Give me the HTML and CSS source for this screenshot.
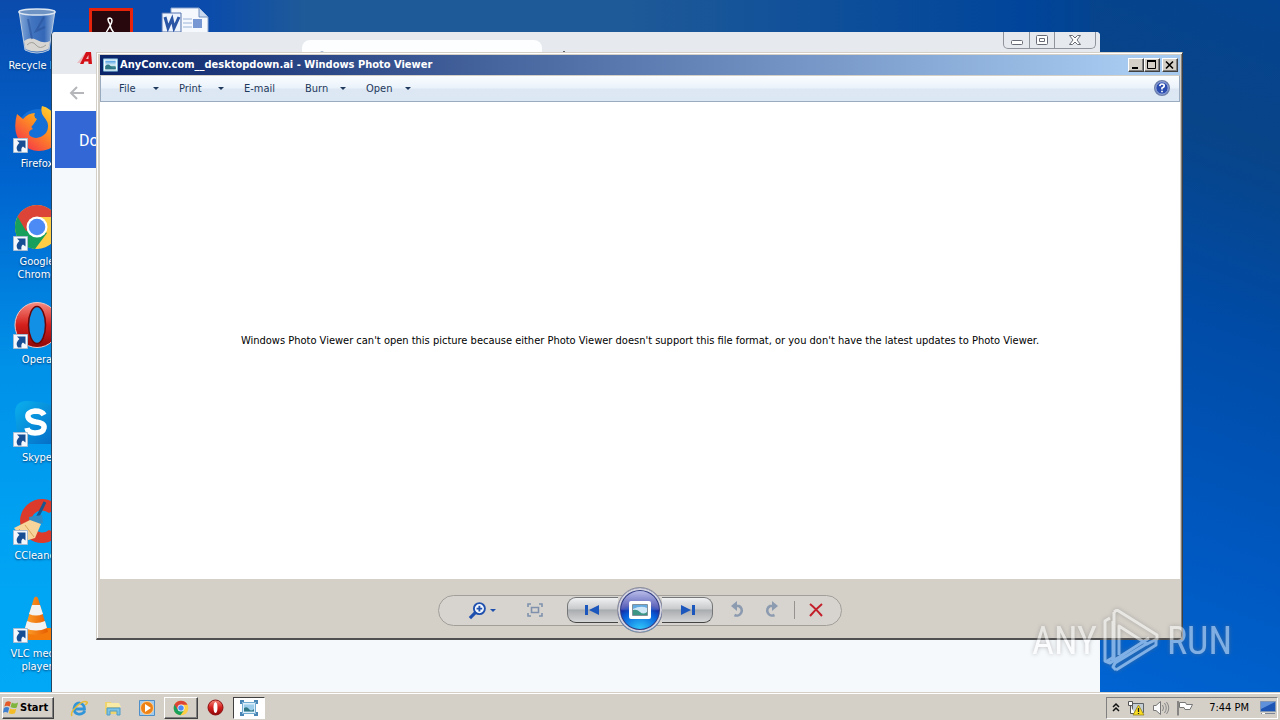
FILE: index.html
```html
<!DOCTYPE html>
<html lang="en">
<head>
<meta charset="utf-8">
<title>Desktop</title>
<link rel="stylesheet" href="styles.css">
</head>
<body>
<svg class="defs" aria-hidden="true">
  <defs>
    <linearGradient id="glass" x1="0" y1="0" x2="1" y2="0"><stop offset="0" stop-color="#9dbbe0"/><stop offset=".35" stop-color="#4d7cc2"/><stop offset=".7" stop-color="#3c6cb8"/><stop offset="1" stop-color="#b5cdea"/></linearGradient>
    <linearGradient id="fox" x1="1" y1="0" x2=".2" y2="1"><stop offset="0" stop-color="#ffe23c"/><stop offset=".45" stop-color="#ff9a1e"/><stop offset="1" stop-color="#f4304c"/></linearGradient>
    <linearGradient id="red" x1="0" y1="0" x2="0" y2="1"><stop offset="0" stop-color="#f58b80"/><stop offset=".5" stop-color="#d5201c"/><stop offset="1" stop-color="#8e0608"/></linearGradient>
    <linearGradient id="sky" x1="0" y1="0" x2="1" y2="1"><stop offset="0" stop-color="#0ab0ee"/><stop offset="1" stop-color="#0568c4"/></linearGradient>
    <linearGradient id="pic" x1="0" y1="0" x2="0" y2="1"><stop offset="0" stop-color="#4d9de0"/><stop offset=".55" stop-color="#e4f3fa"/><stop offset=".6" stop-color="#62a49d"/><stop offset="1" stop-color="#2b6e9c"/></linearGradient>
    <linearGradient id="cone" x1="0" y1="0" x2="1" y2="0"><stop offset="0" stop-color="#ffa52e"/><stop offset="1" stop-color="#e65c00"/></linearGradient>
    <symbol id="chrome" viewBox="0 0 48 48">
      <circle cx="24" cy="24" r="22" fill="#ffce44"/>
      <path d="M24 24 L5 13 A22 22 0 0 0 22 46 L34 30Z" fill="#16a05b"/>
      <path d="M24 24 L13 28 L4.500 13.500 A22 22 0 0 1 43.500 14 L24 14Z" fill="#db4437"/>
      <circle cx="24" cy="24" r="10.500" fill="#fff"/><circle cx="24" cy="24" r="8.300" fill="#4c8bf5"/>
    </symbol>
    <symbol id="opera" viewBox="0 0 48 48">
      <ellipse cx="24" cy="24" rx="22" ry="22.500" fill="url(#red)" stroke="#f6c6c0" stroke-width="1"/>
      <ellipse cx="24" cy="24" rx="8.500" ry="18.500" fill="#1190e5" stroke="#6d0707" stroke-width="1.500"/>
    </symbol>
    <symbol id="shortcut" viewBox="0 0 15 15">
      <path d="M.5.5h14v14H.5z" fill="#f4f8fc" stroke="#a9bdd2"/>
      <path d="M4 2.500H12.500V10.500L10 8.500C8.500 9.500 8 11 8.500 13.500H5C2.500 10 4 7 6.500 5Z" fill="#174d93"/>
    </symbol>
    <symbol id="picture" viewBox="0 0 16 14">
      <path d="M.5.5h15v13H.5z" fill="#eef8fd" stroke="#79b6d8"/><path d="M2.500 2.500h11v9h-11z" fill="url(#pic)"/><path d="M2.500 8q3-3 5.500 0t5.500 1v2.500h-11z" fill="#2f7784"/>
    </symbol>
  </defs>
</svg>

<main class="desktop">
  <ul class="icons">
    <li class="icon">
      <svg class="icon-art" viewBox="0 0 48 48"><path d="M6 4 L42 4 L36 43 Q24 49 12 43Z" fill="url(#glass)" fill-opacity=".85" stroke="#b9cbe0"/><path d="M11 34 Q17 29 24 33 T37 34 L35.500 42 Q24 47 12.500 42Z" fill="#d7d6d2"/><path d="M14 38q5-5 9 0t10 0" fill="none" stroke="#a09e98"/><ellipse cx="24" cy="5" rx="18" ry="3" fill="#6f93c2" stroke="#dbe6f2" stroke-width="1.500"/><path d="M15 12l4 20M31 10l-8 14 9-4" fill="none" stroke="#2a5199" stroke-width="2" opacity=".6"/></svg>
      <span class="icon-label">Recycle Bin</span>
    </li>
    <li class="icon">
      <svg class="icon-art" viewBox="0 0 48 48"><circle cx="25" cy="24" r="20" fill="#1470d6"/><path d="M29 1 Q37 2 44 14 Q52 35 36 44 Q20 50 8 38 Q-1 27 4 9 L10 14 Q15 8 22 8 Q20 12 24 14 L20 20 Q17 22 20 24 Q14 26 17 31 Q25 36 33 28 Q38 20 31 12 Q27 7 29 1Z" fill="url(#fox)"/></svg>
      <svg class="shortcut"><use href="#shortcut"/></svg>
      <span class="icon-label">Firefox</span>
    </li>
    <li class="icon">
      <svg class="icon-art"><use href="#chrome"/></svg>
      <svg class="shortcut"><use href="#shortcut"/></svg>
      <span class="icon-label">Google Chrome</span>
    </li>
    <li class="icon">
      <svg class="icon-art"><use href="#opera"/></svg>
      <svg class="shortcut"><use href="#shortcut"/></svg>
      <span class="icon-label">Opera</span>
    </li>
    <li class="icon">
      <svg class="icon-art" viewBox="0 0 48 48"><path d="M2 14Q2 2 14 2Q20 2 24 3Q46 3 46 25L46 45L12 45Q3 38 3 24Z" fill="url(#sky)"/><path d="M31 16Q29 12 22 12Q14 13 15 18Q16 22 23 23Q32 24 31 29Q30 34 22 34Q15 34 14 29" fill="none" stroke="#fff" stroke-width="5.500"/></svg>
      <svg class="shortcut"><use href="#shortcut"/></svg>
      <span class="icon-label">Skype</span>
    </li>
    <li class="icon">
      <svg class="icon-art" viewBox="0 0 48 48"><path d="M46 10A22 22 0 1 0 46 38L36 33A11 11 0 1 1 36 16Z" fill="#dc3b2b"/><path d="M32 5L23 23" stroke="#18568e" stroke-width="3"/><path d="M16 20L29 18L30 26L17 29Z" fill="#328bc3"/><path d="M17 23Q9 27 1 31L12 44L22 41L28 27Z" fill="#f6d49a"/><path d="M6 32l9 10M12 28l9 12" stroke="#d9a55c"/></svg>
      <svg class="shortcut"><use href="#shortcut"/></svg>
      <span class="icon-label">CCleaner</span>
    </li>
    <li class="icon">
      <svg class="icon-art" viewBox="0 0 48 48"><path d="M8 33H38L44 45H4Z" fill="#f47b0b"/><path d="M21 3Q23 0 25 3L35 37Q23 43 11 37Z" fill="url(#cone)"/><path d="M19 10H27L30 19Q23 22 16 19ZM14 26Q23 30 32 26L34 33Q23 38 12 33Z" fill="#f3f3f3"/></svg>
      <svg class="shortcut"><use href="#shortcut"/></svg>
      <span class="icon-label">VLC media player</span>
    </li>
    <li class="icon">
      <svg class="icon-art" viewBox="0 0 48 48"><path d="M3.500 2.500h41v43h-41z" fill="#28080c" stroke="#e7230b" stroke-width="3"/><path d="M23 17Q19 11 23 11Q27 12 23 19T17 29M23 17Q23 22 29 28" fill="none" stroke="#fff" stroke-width="1.500"/></svg>
    </li>
    <li class="icon third-column">
      <svg class="icon-art" viewBox="0 0 48 48"><path d="M10 1h28l9 9v37H10z" fill="#f5f9fe" stroke="#8ba5cd"/><path d="M38 1v9h9" fill="#c9d9ef" stroke="#7390bd"/><path d="M22 12h9M22 16h9M22 20h9" stroke="#9cb3da"/><path d="M32 12h9v9h-9z" fill="#7898d4"/><path d="M1 6h19v19H1z" fill="#edf3fc" stroke="#5473ae"/><path d="M4 10L7 21L11 12L13 21L18 10" fill="none" stroke="#2a55a5" stroke-width="3"/></svg>
    </li>
  </ul>

  <section class="browser" aria-label="Browser">
    <div class="tabs">
      <svg class="favicon" viewBox="0 0 16 14"><path d="M0 12L8 2H14L15 12H11V10H6L4 12Z" fill="#e8a8ae" opacity=".7"/><path d="M3 13L9 1H14L15 13H11.500V10.500H7.500L6.500 13ZM9 8H11.500V4Z" fill="#d31017" fill-rule="evenodd"/></svg>
      <div class="tab"><svg width="12" height="12" viewBox="0 0 12 12"><circle cx="6" cy="6" r="5.500" fill="#3b5c94"/></svg></div>
      <button class="new-tab" aria-label="New tab"><svg width="12" height="12" viewBox="0 0 12 12"><path d="M6 0V12M0 6H12" stroke="#5f6368" stroke-width="2"/></svg></button>
      <div class="caption-buttons">
        <button aria-label="Minimize browser"><svg width="14" height="10" viewBox="0 0 14 10"><rect x="1.500" y="5.500" width="11" height="4" rx="1" fill="#fff" stroke="#666b75"/></svg></button>
        <button aria-label="Maximize browser"><svg width="14" height="12" viewBox="0 0 14 12"><rect x="1.500" y="1.500" width="11" height="9" rx="1" fill="#fff" stroke="#666b75"/><path d="M4.500 4.500h5v3h-5z" fill="#fff" stroke="#666b75"/></svg></button>
        <button aria-label="Close browser"><svg width="14" height="12" viewBox="0 0 14 12"><path d="M1.500 1.500H4.500L7 4L9.500 1.500H12.500L9 6L12.500 10.500H9.500L7 8L4.500 10.500H1.500L5 6Z" fill="#fff" stroke="#666b75"/></svg></button>
      </div>
    </div>
    <div class="toolbar"><button class="back" aria-label="Back"><svg width="16" height="16" viewBox="0 0 16 16"><path d="M15 8H2M8 2L2 8L8 14" fill="none" stroke="#b5b6b9" stroke-width="2"/></svg></button></div>
    <div class="download-head">Downloads</div>
  </section>

  <section class="viewer" aria-label="Windows Photo Viewer">
    <header class="titlebar">
      <svg class="title-icon"><use href="#picture"/></svg>
      <h1 class="title">AnyConv.com__desktopdown.ai - Windows Photo Viewer</h1>
      <button class="classic" aria-label="Minimize"><svg viewBox="0 0 12 10"><path d="M2 8h6" stroke="#000" stroke-width="2"/></svg></button>
      <button class="classic" aria-label="Maximize"><svg viewBox="0 0 12 10"><path d="M1.500 1.500h8v7h-8z" fill="none" stroke="#000"/><path d="M1 1h9" stroke="#000" stroke-width="2"/></svg></button>
      <button class="classic close" aria-label="Close"><svg viewBox="0 0 12 10"><path d="M2 1.500L9 8.500M9 1.500L2 8.500" stroke="#000" stroke-width="1.600"/></svg></button>
    </header>
    <nav class="menu">
      <button>File<i></i></button><button>Print<i></i></button><button>E-mail</button><button>Burn<i></i></button><button>Open<i></i></button>
      <button class="help" aria-label="Help"><svg width="16" height="16" viewBox="0 0 16 16"><circle cx="8" cy="8" r="7.300" fill="#2b4daf" stroke="#6d7fa9" stroke-width="1.400"/><circle cx="8" cy="8" r="6.200" fill="none" stroke="#c7d3f1" stroke-width=".8"/><path d="M5.800 6.200Q6 4 8 4Q10.300 4 10.200 6Q10 7.300 8 8V9.500M8 10.700V12.300" fill="none" stroke="#fff" stroke-width="1.700"/></svg></button>
    </nav>
    <div class="canvas"><p>Windows Photo Viewer can't open this picture because either Photo Viewer doesn't support this file format, or you don't have the latest updates to Photo Viewer.</p></div>
    <footer class="controls">
      <div class="capsule">
        <div class="group left">
          <button class="zoom" aria-label="Zoom"><svg width="19" height="19" viewBox="0 0 20 20"><circle cx="12" cy="8" r="5.800" fill="#f4f8ff" stroke="#1f50ae" stroke-width="2"/><path d="M8 12L2 18" stroke="#1f50ae" stroke-width="3.400"/><path d="M9 8h6M12 5v6" stroke="#1f50ae" stroke-width="2"/></svg><i></i></button>
          <button aria-label="Fit to window"><svg width="16" height="14" viewBox="0 0 16 14"><path d="M1 4V1H4M12 1H15V4M15 10V13H12M4 13H1V10M4.500 4.500H11.500V9.500H4.500Z" fill="none" stroke="#7f91ad" stroke-width="1.600"/></svg></button>
        </div>
        <div class="playback">
          <button class="step prev" aria-label="Previous"><svg width="16" height="12" viewBox="0 0 16 12"><path d="M1 1h3v10H1zM15 1v10L5 6z" fill="#1b57bd"/></svg></button>
          <button class="show" aria-label="Play slide show"><svg width="24" height="20" viewBox="0 0 24 20"><rect x="1" y="1" width="22" height="18" rx="2" fill="#fff"/><path d="M4.500 4.500h15v11h-15z" fill="#cfe8f7" stroke="#80919b"/><path d="M5 5H19V8Q13 5 5 9Z" fill="#64abe2"/><path d="M5 10Q9 9 12 12T19 12V15H5Z" fill="#3d9586"/></svg></button>
          <button class="step next" aria-label="Next"><svg width="16" height="12" viewBox="0 0 16 12"><path d="M12 1h3v10h-3zM1 1v10L11 6z" fill="#1b57bd"/></svg></button>
        </div>
        <div class="group right">
          <button aria-label="Rotate counterclockwise"><svg width="16" height="18" viewBox="0 0 16 18"><path d="M5 5H9A5 5 0 1 1 4.500 14" fill="none" stroke="#8c9bb0" stroke-width="2.600"/><path d="M1 5L7 0V10Z" fill="#8c9bb0"/></svg></button>
          <button aria-label="Rotate clockwise"><svg width="16" height="18" viewBox="0 0 16 18"><path d="M11 5H7A5 5 0 1 0 11.500 14" fill="none" stroke="#8c9bb0" stroke-width="2.600"/><path d="M15 5L9 0V10Z" fill="#8c9bb0"/></svg></button>
          <span class="divider"></span>
          <button aria-label="Delete"><svg width="16" height="16" viewBox="0 0 16 16"><path d="M2 2Q7 6 14 14M14 2Q7 8 2 14" fill="none" stroke="#c3202b" stroke-width="2"/></svg></button>
        </div>
      </div>
    </footer>
  </section>

  <div class="watermark"><span>ANY</span><svg width="58" height="64" viewBox="0 0 58 64"><g fill="none" stroke="#fff" stroke-width="3" stroke-linejoin="round"><path d="M7 9L2 12V52L7 54L10 52V12"/><path d="M11 3L14 1L54 26V30L44 35L16 17V46"/><path d="M11 3V48L4 52M10 52L46 29M13 61L53 36V31M13 61L10 58L12 54L45 34"/></g></svg><span>RUN</span></div>
</main>

<footer class="taskbar">
  <button class="start"><svg width="16" height="15" viewBox="0 0 18 16"><path d="M3 2Q6 0 9 2L7.500 7Q4.500 5 1.500 7Z" fill="#e35a28"/><path d="M10 2.500Q13 4.500 17 2.500L15.500 8Q12 9.500 8.500 7.500Z" fill="#7fb53d"/><path d="M1 8.500Q4.500 6.500 7 8.500L5.500 14Q3 12 0 14Z" fill="#3e7fd0"/><path d="M8 9Q12 11 15 9L13.500 14.500Q10 16 6.500 14.500Z" fill="#f4bd27"/></svg>Start</button>
  <div class="tasks">
    <button aria-label="Internet Explorer"><svg width="18" height="18" viewBox="0 0 18 18"><path d="M15 12Q12 16 8 15Q4 14 4 9.500Q5 4 9.500 4Q14.500 5 14.500 10H5" fill="none" stroke="#3295d8" stroke-width="2.800"/><path d="M2 17Q0 14 6 8Q13 1 17 3Q18 4 15 6" fill="none" stroke="#e8bb36" stroke-width="1.500"/></svg></button>
    <button aria-label="Explorer"><svg width="18" height="18" viewBox="0 0 18 18"><path d="M1 3H7L8 5H15V15H1Z" fill="#efd36e"/><path d="M3 4H15L17 8H3Z" fill="#f9eaa5"/><path d="M3 16V9H16V16H13V12H6V16Z" fill="#7dc2e4" stroke="#4f9dc7"/></svg></button>
    <button aria-label="Media Player"><svg width="18" height="18" viewBox="0 0 18 18"><path d="M1.500 1.500h15v15h-15z" fill="#a3cbed" stroke="#4d8fc6"/><circle cx="9" cy="9" r="6.500" fill="#ef8214" stroke="#fbd19b"/><path d="M7 5L13 9L7 13Z" fill="#fff"/></svg></button>
    <button class="raised" aria-label="Google Chrome"><svg width="16" height="16"><use href="#chrome"/></svg></button>
    <button aria-label="Opera"><svg width="17" height="17" viewBox="0 0 17 17"><circle cx="8.500" cy="8.500" r="7.500" fill="url(#red)" stroke="#8e1010"/><ellipse cx="8.500" cy="8.500" rx="2" ry="5.500" fill="#fff"/></svg></button>
    <button class="pressed" aria-label="Photo Viewer"><svg width="18" height="16" viewBox="0 0 18 16"><path d="M1 4V1H4M14 1H17V4M17 12V15H14M4 15H1V12" fill="none" stroke="#4a86b5" stroke-width="2"/><path d="M2.500 2.500h13v11h-13z" fill="#dceffa" stroke="#74abd0"/><path d="M4 4.500h10v7H4z" fill="#9ccdea"/><path d="M4 8Q7 6 9 9T14 9V11.500H4Z" fill="#2f7784"/></svg></button>
  </div>
  <div class="tray">
    <svg width="8" height="12" viewBox="0 0 8 12"><path d="M1 5L4 2L7 5M1 9L4 6L7 9" fill="none" stroke="#111" stroke-width="1.500"/></svg>
    <svg width="18" height="16" viewBox="0 0 18 16"><path d="M5.500 3.500h11v9h-11z" fill="#c4ccd4" stroke="#5c6266"/><path d="M1.500 1.500h4v4h-4zM3.500 6v7.500H8" fill="#fff" stroke="#555"/><path d="M11.500 5L17 15H6Z" fill="#f9dc22" stroke="#8b7812" stroke-width=".7"/><path d="M11.500 8v4M11.500 13v1" stroke="#222" stroke-width="1.300"/></svg>
    <svg width="18" height="16" viewBox="0 0 18 16"><path d="M1.500 5.500H4L8.500 1.500V14.500L4 10.500H1.500Z" fill="#fafafa" stroke="#777"/><path d="M10.500 5Q12.500 8 10.500 11M12.500 3Q16 8 12.500 13M14.500 2Q19 8 14.500 14" fill="none" stroke="#888"/></svg>
    <svg width="18" height="16" viewBox="0 0 18 16"><path d="M1 1V15.500" stroke="#666" stroke-width="1.400"/><path d="M2.500 2.500H8.500L9.500 4.500H15.500L13 9.500H8L7 7.500H2.500Z" fill="#fff" stroke="#777"/></svg>
    <time>7:44 PM</time>
    <svg width="16" height="14" viewBox="0 0 16 14"><path d="M.5.5h15v10H.5z" fill="#1d55b5" stroke="#8197b4"/><path d="M1 1H15L1 8Z" fill="#5f91da"/><path d="M1 12.500h14" stroke="#7b8796"/><path d="M2 12.500h3" stroke="#fff"/></svg>
  </div>
</footer>
</body>
</html>
```
FILE: styles.css
```css
* { box-sizing: border-box; }
body {
  margin: 0;
  height: 100vh;
  display: flex;
  flex-direction: column;
  overflow: hidden;
  font: 11px/13px "DejaVu Sans Condensed", "DejaVu Sans", sans-serif;
  color: #000;
}
button { font: inherit; color: inherit; border: 0; padding: 0; background: none; }
svg { display: block; flex: none; }
.defs { position: absolute; width: 0; height: 0; }

.desktop {
  position: relative;
  flex: 1;
  min-height: 0;
  overflow: hidden;
  background:
    linear-gradient(#0a4bac, #0064cf 26%, #0090e8 52%, #00a3f3 78%, #00a8f5) 0 0 / 100px 100% no-repeat,
    linear-gradient(20deg, #0064d2, #0058c0 25%, #004ba6 55%, #084488 80%, #04438f) 100% 0 / 190px 100% no-repeat,
    linear-gradient(90deg, #0a4bac 16%, #1f5a98 24%, #1f5a98 48%, #00459b 80%, #04438f 86%);
}
.icons {
  margin: 0;
  padding: 0;
  list-style: none;
  display: grid;
  grid-auto-flow: column;
  grid-template-rows: repeat(7, 98px);
  grid-auto-columns: 74px;
}
.icon {
  position: relative;
  display: flex;
  flex-direction: column;
  align-items: center;
  gap: 4px;
  padding-top: 7px;
  color: #fff;
  text-align: center;
  text-shadow: 0 1px 2px #03366f;
}
.third-column { grid-column: 3; grid-row: 1; }
.icon-art { width: 48px; height: 48px; }
.icon-label { max-width: 66px; }
.icon:first-child .icon-label { white-space: nowrap; }
.shortcut { position: absolute; left: 13px; top: 40px; width: 15px; height: 15px; }

.browser {
  position: absolute;
  left: 51px;
  right: 180px;
  top: 32px;
  bottom: 0;
  display: flex;
  flex-direction: column;
  background: #f6f9fc;
  border-left: 1px solid #27455f;
  border-radius: 4px 4px 0 0;
  overflow: hidden;
}
.tabs { display: flex; height: 42px; flex: none; background: #e6e9ed; padding-left: 25px; }
.favicon { width: 16px; height: 14px; margin-top: 19px; }
.tab { width: 240px; margin: 8px 0 0 209px; padding: 11px 14px; border-radius: 8px 8px 0 0; background: #fcfeff; }
.new-tab { margin-left: 16px; padding-top: 8px; }
.caption-buttons {
  display: flex;
  height: 17px;
  margin: 0 4px 0 auto;
  border: 1px solid #8f949c;
  border-top: 0;
  border-radius: 0 0 5px 5px;
}
.caption-buttons button { width: 25px; display: grid; place-items: center; }
.caption-buttons button + button { border-left: 1px solid #8f949c; }
.caption-buttons button:last-child { width: 41px; }
.toolbar { flex: none; height: 37px; background: #fff; display: flex; align-items: center; padding-left: 17px; }
.download-head {
  flex: none;
  height: 57px;
  margin-left: 3px;
  padding-left: 24px;
  background: #3367d6;
  color: #fff;
  font: 16px/59px Roboto, sans-serif;
}

.viewer {
  position: absolute;
  left: 96px;
  right: 97px;
  top: 52px;
  bottom: 52px;
  display: flex;
  flex-direction: column;
  padding: 2px;
  background: #d4d0c8;
  border: 1px solid #d4d0c8;
  border-right-color: #404040;
  border-bottom: 2px solid #505050;
  box-shadow: inset 1px 1px #fff, inset -1px 0 #808080;
}
.titlebar {
  flex: none;
  display: flex;
  align-items: center;
  height: 20px;
  margin-left: 1px;
  padding: 0 2px 0 3px;
  background: linear-gradient(90deg, #0a246a, #a6caf0 95%);
}
.title-icon { width: 15px; height: 14px; }
.title { flex: 1; margin: 0 0 0 2px; color: #fff; font-size: 11px; line-height: 16px; }
.classic {
  width: 16px;
  height: 14px;
  display: grid;
  place-items: center;
  background: #d4d0c8;
  border: 1px solid;
  border-color: #fff #404040 #404040 #fff;
  box-shadow: inset -1px -1px #808080;
}
.classic svg { width: 12px; height: 10px; }
.close { margin-left: 2px; }
.menu {
  flex: none;
  height: 27px;
  display: grid;
  grid-template-columns: 60px 65px 61px 61px 65px 1fr;
  align-items: center;
  margin-left: 1px;
  padding: 0 9px 1px 18px;
  color: #1e395b;
  background: linear-gradient(#fafdff, #eaf2fa 48%, #dce7f3 52%, #dce8f3);
  border: 1px solid #9aabc0;
  border-top-color: #d4d0c8;
}
.menu button { display: flex; justify-content: space-between; align-items: center; padding-right: 20px; }
.menu .help { padding: 0; justify-self: end; }
.menu i, .zoom i { border: 3px solid transparent; border-top-color: #1e395b; border-bottom: 0; }
.canvas { flex: 1; display: grid; place-items: center; background: #fff; margin-left: 1px; }
.canvas p { margin: 0; text-align: center; }
.controls { flex: none; height: 57px; display: grid; place-items: center; padding-top: 5px; }
.capsule {
  display: grid;
  grid-template-columns: 128px 146px 128px;
  align-items: center;
  height: 31px;
  border: 1px solid #a29f9a;
  border-radius: 16px;
  background: #d7d4cf;
}
.group { display: flex; align-items: center; }
.left { padding-left: 29px; gap: 31px; }
.right { padding-left: 17px; gap: 17px; }
.divider { width: 1px; height: 18px; background: #95928f; margin: 0 -4px 0 -2px; }
.zoom { display: flex; align-items: center; gap: 3px; }
.zoom i { border-top-color: #1f50ae; }
.playback { display: flex; align-items: center; height: 29px; }
.step {
  flex: 1;
  height: 26px;
  display: flex;
  align-items: center;
  border: 1px solid #747678;
  border-bottom-color: #444;
  background: linear-gradient(#f0f1f2, #c8cacc 45%, #a9acaf 50%, #d5d6d6);
}
.prev { border-radius: 9px 0 0 9px; padding-left: 16px; border-right: 0; }
.next { border-radius: 0 9px 9px 0; padding-right: 16px; border-left: 0; justify-content: flex-end; }
.show {
  width: 46px;
  height: 46px;
  margin: 0 -1px;
  display: grid;
  place-items: center;
  border: 1px solid #8b8c98;
  border-radius: 50%;
  box-shadow: inset 0 0 0 2px #d3d4df, inset 0 0 0 3px #343f85;
  background: radial-gradient(circle at 50% 100%, #36d8ff 0, #0862dc 42%, transparent 60%), linear-gradient(#c9ccf0, #5259b5 48%, #141f98 52%, #0860e0);
}

.watermark {
  position: absolute;
  right: 48px;
  bottom: 19px;
  display: flex;
  align-items: center;
  gap: 6px;
  color: #fff;
  font: 38px/64px "Roboto Condensed", Roboto, sans-serif;
  opacity: .5;
  filter: drop-shadow(0 0 2px #777);
}

.taskbar {
  flex: none;
  height: 28px;
  display: flex;
  align-items: center;
  padding: 3px 2px 1px;
  background: #d4d0c8;
  border-top: 1px solid #d4d0c8;
  box-shadow: inset 0 1px #fff;
}
.start, .raised {
  background: #d4d0c8;
  border: 1px solid;
  border-color: #fff #404040 #404040 #fff;
  box-shadow: inset -1px -1px #808080;
}
.start { display: flex; align-items: center; width: 52px; height: 22px; gap: 1px; font-weight: bold; }
.tasks { display: flex; align-items: center; margin-left: 8px; }
.tasks button { width: 34px; height: 22px; display: grid; place-items: center; }
.tasks .pressed { width: 32px; background: #fff; border: 1px solid; border-color: #404040 #fff #fff #404040; margin-left: 1px; }
.tray {
  display: flex;
  align-items: center;
  height: 22px;
  margin-left: auto;
  padding: 0 1px 0 5px;
  gap: 7px;
  border: 1px solid;
  border-color: #808080 #fff #fff #808080;
}
.tray time { margin: 0 4px 0 7px; }
```
